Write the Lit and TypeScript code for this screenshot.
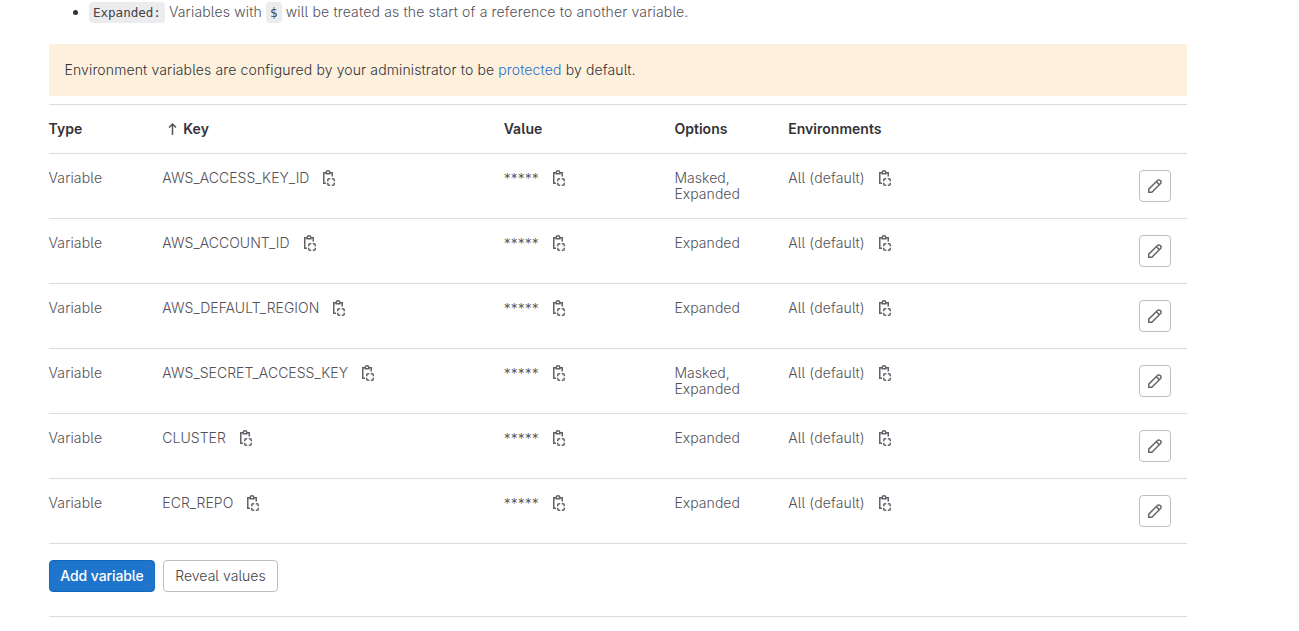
import { LitElement, html, css, svg } from "lit";
import { customElement, property } from "lit/decorators.js";

const ICONS: Record<string, unknown> = {
  copy: svg`
    <path d="M5 2.75H2.75v10.5H5M9 2.75h2.25V6.5" />
    <path d="M5.25 3.75v-1.5a1.75 1.5 0 0 1 3.5 0v1.5z" />
    <path d="M6.75 11.3v-1.3a1.25 1.25 0 0 1 1.25-1.25h1.2M10.8 8.75h1.2a1.25 1.25 0 0 1 1.25 1.25v1.3M13.25 12.7v1.3a1.25 1.25 0 0 1-1.25 1.25h-1.2M9.2 15.25h-1.2a1.25 1.25 0 0 1-1.25-1.25v-1.3" />`,
  pencil: svg`
    <path d="M1.75 14.25v-3.1l8.7-8.7a1.9 1.9 0 0 1 2.7 0l.4.4a1.9 1.9 0 0 1 0 2.7l-8.7 8.7z" />
    <path d="M9.3 3.6 12.4 6.7" />`,
  up: svg`<path d="M5.5 14V3M2 6.5 5.5 3 9 6.5" />`,
};

@customElement("ui-icon")
export class UiIcon extends LitElement {
  @property() name = "copy";
  static styles = css`
    :host { display: block; width: 16px; height: 16px; flex: none; }
    svg { display: block; fill: none; stroke: currentColor; stroke-width: 1.5; }
  `;
  render() {
    return html`<svg width="16" height="16" viewBox="0 0 16 16">${ICONS[this.name]}</svg>`;
  }
}

const VARIABLES = [
  { key: "AWS_ACCESS_KEY_ID", options: "Masked, Expanded" },
  { key: "AWS_ACCOUNT_ID", options: "Expanded" },
  { key: "AWS_DEFAULT_REGION", options: "Expanded" },
  { key: "AWS_SECRET_ACCESS_KEY", options: "Masked, Expanded" },
  { key: "CLUSTER", options: "Expanded" },
  { key: "ECR_REPO", options: "Expanded" },
];

@customElement("app-root")
export class AppRoot extends LitElement {
  static styles = css`
    :host {
      display: block;
      box-sizing: border-box;
      height: 631px;
      overflow: hidden;
      padding: 0 112px 0 49px;
      background: #fff;
      color: #535158;
      font: 350 14px/16px Inter, "Liberation Sans", sans-serif;
      font-feature-settings: "cv05";
      letter-spacing: 0.13px;
    }
    * { box-sizing: border-box; }
    .notes { margin: 0; padding: 0 0 0 40px; height: 44px; list-style: disc; line-height: 20px; letter-spacing: 0.16px; }
    .notes li { padding-top: 2px; }
    .notes li::marker { color: #333238; }
    code {
      font: 12.6px/16px "DejaVu Sans Mono", monospace;
      letter-spacing: -0.05px;
      color: #434248;
      background: #ececef;
      border-radius: 4px;
      padding: 3px 4px;
    }
    .alert { height: 52px; padding: 16px 15.5px; background: #fdf1dd; color: #333238; line-height: 20px; margin-bottom: 8px; }
    .alert a { color: #1f6fce; text-decoration: none; }
    .row {
      display: grid;
      grid-template-columns: 113.8px 341.4px 170.7px 113.8px 1fr auto;
      height: 65px;
      padding: 16px 16px 0 0;
      border-bottom: 1px solid #dcdcde;
    }
    .row > span { margin-left: -0.5px; }
    .head { height: 50px; border-top: 1px solid #dcdcde; color: #333238; font-weight: 600; letter-spacing: 0.03px; }
    .sorted { display: flex; padding-left: 5px; }
    .sorted ui-icon { color: #535158; }
    .copyable { display: flex; align-items: flex-start; gap: 12px; }
    .copyable ui-icon { color: #626168; }
    .key { letter-spacing: 0.03px; }
    .masked { padding-top: 1px; letter-spacing: 0.03px; }
    .options { width: 80px; letter-spacing: 0.05px; }
    button {
      display: flex;
      align-items: center;
      justify-content: center;
      height: 32px;
      border: 1px solid #bfbfc3;
      border-radius: 4px;
      background: #fff;
      color: #535158;
      padding: 0;
      font: inherit;
      letter-spacing: 0.03px;
      font-feature-settings: inherit;
    }
    .edit { width: 32px; color: #68676d; }
    .actions { display: flex; gap: 8px; padding: 16px 0 24px; border-bottom: 1px solid #dcdcde; }
    .add { width: 106px; background: #1f75cb; border-color: #1068bf; color: #fff; font-weight: 500; letter-spacing: -0.1px; }
    .reveal { width: 115px; color: #434248; }
  `;

  render() {
    return html`
      <ul class="notes">
        <li><code>Expanded:</code> Variables with <code>$</code> will be treated as the start of a reference to another variable.</li>
      </ul>
      <div class="alert">Environment variables are configured by your administrator to be <a>protected</a> by default.</div>
      <div class="row head">
        <span>Type</span>
        <span class="sorted"><ui-icon name="up"></ui-icon>Key</span>
        <span>Value</span>
        <span>Options</span>
        <span>Environments</span>
      </div>
      ${VARIABLES.map(
        (v) => html`
          <div class="row">
            <span>Variable</span>
            <span class="copyable"><span class="key">${v.key}</span><ui-icon></ui-icon></span>
            <span class="copyable"><span class="masked">*****</span><ui-icon></ui-icon></span>
            <span class="options">${v.options}</span>
            <span class="copyable"><span>All (default)</span><ui-icon></ui-icon></span>
            <button class="edit" aria-label="Edit"><ui-icon name="pencil"></ui-icon></button>
          </div>`
      )}
      <div class="actions">
        <button class="add">Add variable</button>
        <button class="reveal">Reveal values</button>
      </div>
    `;
  }
}
